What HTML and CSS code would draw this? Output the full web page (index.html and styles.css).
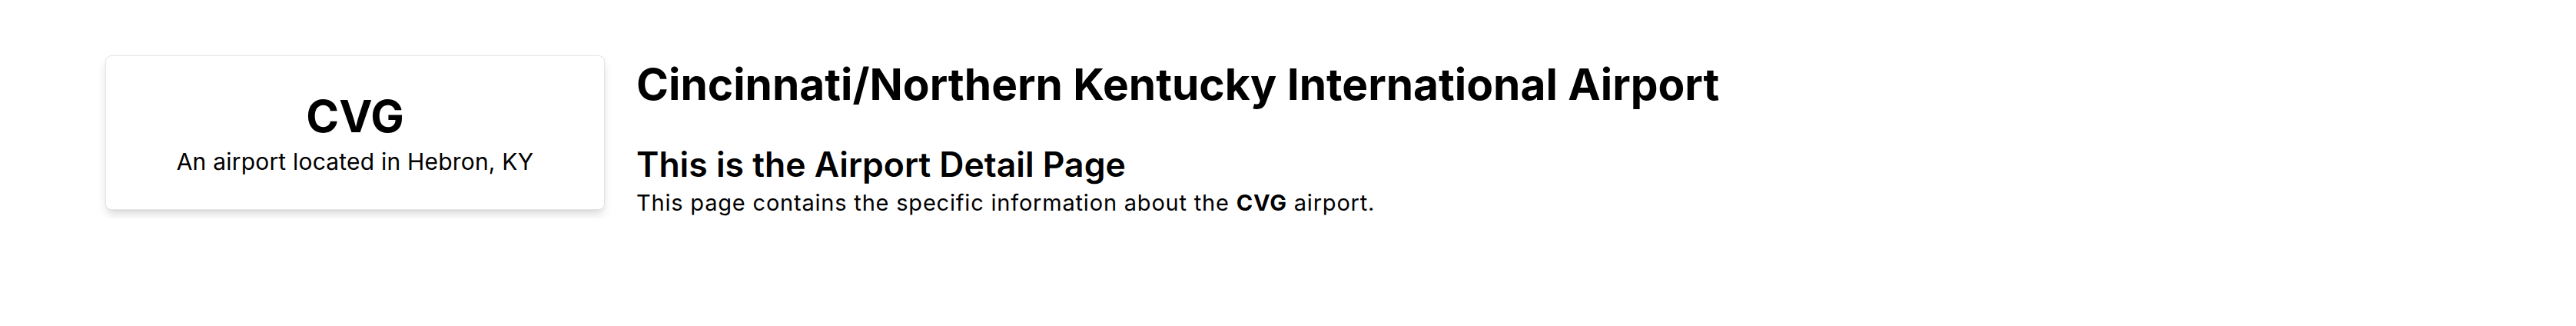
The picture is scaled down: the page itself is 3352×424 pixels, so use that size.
FILE: index.html
```html
<!DOCTYPE html>
<html lang="en">
<head>
<meta charset="utf-8">
<title>CVG - Airport Detail</title>
<link rel="stylesheet" href="styles.css">
</head>
<body>
<main class="page">
  <section class="card">
    <div class="card-code">CVG</div>
    <div class="card-sub">An airport located in Hebron, KY</div>
  </section>
  <section class="detail">
    <h1 class="detail-title">Cincinnati/Northern Kentucky International Airport</h1>
    <h2 class="detail-heading">This is the Airport Detail Page</h2>
    <p class="detail-text">This page contains the specific information about the <strong>CVG</strong> airport.</p>
  </section>
</main>
</body>
</html>
```

FILE: styles.css
```css
html, body {
  margin: 0;
  padding: 0;
  background: #ffffff;
}
body {
  font-family: Inter, "Noto Sans", "Liberation Sans", sans-serif;
  color: #000000;
}
.page {
  display: flex;
  align-items: flex-start;
  gap: 41px;
  padding: 72px 0 0 137px;
}
.card {
  flex: 0 0 auto;
  width: 650px;
  box-sizing: border-box;
  border: 1px solid #e4e4e7;
  border-radius: 8px;
  background: #fff;
  box-shadow: 0 8px 14px -2px rgba(0,0,0,0.12), 0 4px 8px -4px rgba(0,0,0,0.1);
  padding: 43px 16px 42px;
  text-align: center;
}
.card-code {
  font-size: 58px;
  line-height: 70px;
  font-weight: 700;
}
.card-sub {
  margin-top: 4px;
  font-size: 30px;
  line-height: 40px;
  letter-spacing: 0.2px;
}
.detail {
  flex: 1 1 auto;
}
.detail-title {
  margin: 4px 0 0;
  font-size: 56.8px;
  line-height: 68px;
  font-weight: 700;
}
.detail-heading {
  margin: 42px 0 0;
  font-size: 44.5px;
  line-height: 56px;
  font-weight: 600;
}
.detail-text {
  margin: 2px 0 0;
  font-size: 29px;
  line-height: 40px;
  letter-spacing: 0.8px;
}
.detail-text strong {
  font-weight: 700;
}
```
